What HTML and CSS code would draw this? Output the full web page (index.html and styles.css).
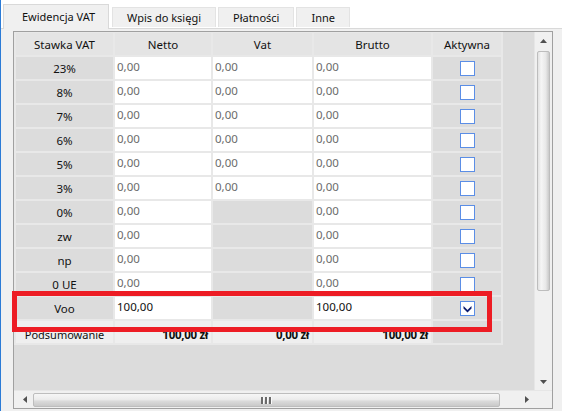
FILE: index.html
```html
<!DOCTYPE html>
<html lang="pl">
<head>
<meta charset="utf-8">
<title>Ewidencja VAT</title>
<link rel="stylesheet" href="styles.css">
</head>
<body>
<div class="window">
  <div class="tabs">
    <div class="tab active">Ewidencja VAT</div>
    <div class="tab">Wpis do księgi</div>
    <div class="tab">Płatności</div>
    <div class="tab">Inne</div>
  </div>
  <div class="page">
    <div class="grid">
      <div class="grid-main">
        <div class="viewport">
          <div class="table">
            <div class="hd">Stawka VAT</div><div class="hd">Netto</div><div class="hd">Vat</div><div class="hd">Brutto</div><div class="hd">Aktywna</div>

            <div class="rh">23%</div><div class="c">0,00</div><div class="c">0,00</div><div class="c">0,00</div><div class="chk"><span class="box"></span></div>
            <div class="rh">8%</div><div class="c">0,00</div><div class="c">0,00</div><div class="c">0,00</div><div class="chk"><span class="box"></span></div>
            <div class="rh">7%</div><div class="c">0,00</div><div class="c">0,00</div><div class="c">0,00</div><div class="chk"><span class="box"></span></div>
            <div class="rh">6%</div><div class="c">0,00</div><div class="c">0,00</div><div class="c">0,00</div><div class="chk"><span class="box"></span></div>
            <div class="rh">5%</div><div class="c">0,00</div><div class="c">0,00</div><div class="c">0,00</div><div class="chk"><span class="box"></span></div>
            <div class="rh">3%</div><div class="c">0,00</div><div class="c">0,00</div><div class="c">0,00</div><div class="chk"><span class="box"></span></div>
            <div class="rh">0%</div><div class="c">0,00</div><div class="off"></div><div class="c">0,00</div><div class="chk"><span class="box"></span></div>
            <div class="rh">zw</div><div class="c">0,00</div><div class="off"></div><div class="c">0,00</div><div class="chk"><span class="box"></span></div>
            <div class="rh">np</div><div class="c">0,00</div><div class="off"></div><div class="c">0,00</div><div class="chk"><span class="box"></span></div>
            <div class="rh">0 UE</div><div class="c">0,00</div><div class="off"></div><div class="c">0,00</div><div class="chk"><span class="box"></span></div>
            <div class="rh">Voo</div><div class="c val">100,00</div><div class="off"></div><div class="c val">100,00</div><div class="chk"><span class="box checked"><svg viewBox="0 0 13 13" width="13" height="13"><path d="M2.5 4 L6.5 8 L10.5 4 L10.5 6.5 L6.5 10.5 L2.5 6.5 Z" fill="#0a1a6e"/></svg></span></div>
            <div class="sum-label">Podsumowanie</div><div class="sum">100,00 zł</div><div class="sum">0,00 zł</div><div class="sum">100,00 zł</div><div class="off"></div>
          </div>
        </div>
        <div class="vscroll">
          <div class="arrow"><svg width="7" height="4" viewBox="0 0 7 4"><path d="M0 4 L3.5 0 L7 4 Z" fill="#505050"/></svg></div>
          <div class="vtrack"><div class="vthumb"></div></div>
          <div class="arrow"><svg width="7" height="4" viewBox="0 0 7 4"><path d="M0 0 L3.5 4 L7 0 Z" fill="#505050"/></svg></div>
        </div>
      </div>
      <div class="hscroll-row">
        <div class="hscroll">
          <div class="harrow"><svg width="4" height="7" viewBox="0 0 4 7"><path d="M4 0 L0 3.5 L4 7 Z" fill="#505050"/></svg></div>
          <div class="htrack"><div class="hthumb"><span class="grip"></span><span class="grip"></span><span class="grip"></span></div></div>
          <div class="harrow"><svg width="4" height="7" viewBox="0 0 4 7"><path d="M0 0 L4 3.5 L0 7 Z" fill="#505050"/></svg></div>
        </div>
        <div class="corner"></div>
      </div>
      <div class="highlight"></div>
    </div>
  </div>
</div>
</body>
</html>
```
FILE: styles.css
```css
html, body {
  margin: 0;
  padding: 0;
  background: #ffffff;
}
body {
  width: 562px;
  height: 411px;
  overflow: hidden;
  font-family: "Noto Sans", "Open Sans", sans-serif;
  font-size: 11px;
  color: #111;
}
.window {
  height: 411px;
  border-left: 1px solid #2b7bd6;
  display: flex;
  flex-direction: column;
}
.tabs {
  height: 28px;
  display: flex;
  align-items: flex-end;
  padding-left: 2px;
  position: relative;
  z-index: 2;
}
.tab {
  height: 20px;
  margin-bottom: 1px;
  padding: 0 14px;
  margin-right: 2px;
  background: #f0f0f0;
  border: 1px solid #e3e3e3;
  border-bottom: none;
  box-sizing: border-box;
  display: flex;
  align-items: center;
  line-height: 1;
}
.tab.active {
  height: 25px;
  margin-bottom: -1px;
  margin-right: 3px;
  padding: 0 13px 2px 18px;
  background: #f0f0f0;
  border-color: #d9d9d9;
}
.page {
  flex: 1;
  background: #f0f0f0;
  border-top: 1px solid #d9d9d9;
  padding: 2px 9px 2px 12px;
  display: flex;
}
.grid {
  position: relative;
  flex: 1;
  border: 1px solid #a0a0a0;
  background: #dcdcdc;
  display: flex;
  flex-direction: column;
}
.grid-main {
  flex: 1;
  display: flex;
  min-height: 0;
}
.viewport {
  flex: 1;
  overflow: hidden;
}
.table {
  display: inline-grid;
  grid-template-columns: 97px 96px 99px 117px 68px;
  grid-auto-rows: 22px;
  gap: 2px;
  padding: 1px 2px 2px 2px;
  background: #e8e8e8;
}
.table > div {
  display: flex;
  align-items: center;
  white-space: nowrap;
  overflow: hidden;
}
.hd {
  background: #e4e4e4;
  justify-content: center;
  color: #111;
  font-size: 11.5px;
}
.rh {
  background: #dcdcdc;
  justify-content: center;
  color: #111;
  font-size: 11.5px;
}
.c {
  background: #ffffff;
  padding-left: 2px;
  color: #6b6b6b;
  padding-bottom: 3px;
  font-size: 11.5px;
}
.c.val {
  color: #111;
}
.off {
  background: #dcdcdc;
}
.chk {
  background: #dcdcdc;
  justify-content: center;
}
.box {
  width: 15px;
  height: 15px;
  box-sizing: border-box;
  border: 1px solid #5b8ee6;
  background: #ffffff;
  display: flex;
  align-items: center;
  justify-content: center;
}
.sum-label {
  background: #efefef;
  justify-content: center;
  padding-top: 4px;
}
.sum {
  background: #efefef;
  justify-content: flex-end;
  padding-right: 3px;
  padding-top: 4px;
  font-weight: bold;
  font-size: 11.5px;
  letter-spacing: -0.3px;
}
.vscroll {
  width: 17px;
  background: #f0f0f0;
  display: flex;
  flex-direction: column;
  align-items: center;
  border-left: 1px solid #e6e6e6;
}
.arrow {
  height: 17px;
  display: flex;
  align-items: center;
  justify-content: center;
}
.vtrack {
  flex: 1;
  width: 100%;
  padding: 2px 2px 0 2px;
  box-sizing: border-box;
}
.vthumb {
  height: 238px;
  border: 1px solid #bdbdbd;
  border-radius: 2px;
  background: linear-gradient(to right, #e2e2e2, #f5f5f5 30%, #e8e8e8 70%, #c9c9c9);
}
.hscroll-row {
  height: 17px;
  display: flex;
  border-top: 1px solid #e6e6e6;
}
.hscroll {
  flex: 1;
  background: #f0f0f0;
  display: flex;
  align-items: center;
}
.harrow {
  width: 17px;
  height: 17px;
  display: flex;
  align-items: center;
  justify-content: center;
}
.harrow:first-child {
  padding-left: 2px;
}
.htrack {
  flex: 1;
  height: 100%;
  padding: 2px 0 1px 0;
  box-sizing: border-box;
}
.hthumb {
  width: 467px;
  height: 100%;
  box-sizing: border-box;
  border: 1px solid #bdbdbd;
  border-radius: 2px;
  background: linear-gradient(to bottom, #f6f6f6, #ececec 45%, #dadada 60%, #c9c9c9);
  display: flex;
  align-items: center;
  justify-content: center;
  gap: 1px;
}
.grip {
  width: 2px;
  height: 7px;
  background: #6b6b6b;
  border-right: 1px solid #fafafa;
}
.corner {
  width: 17px;
  background: #f0f0f0;
}
.highlight {
  position: absolute;
  left: -2px;
  top: 259px;
  width: 480px;
  height: 41px;
  border: 5px solid #ed1c24;
  box-sizing: border-box;
  pointer-events: none;
}
```
